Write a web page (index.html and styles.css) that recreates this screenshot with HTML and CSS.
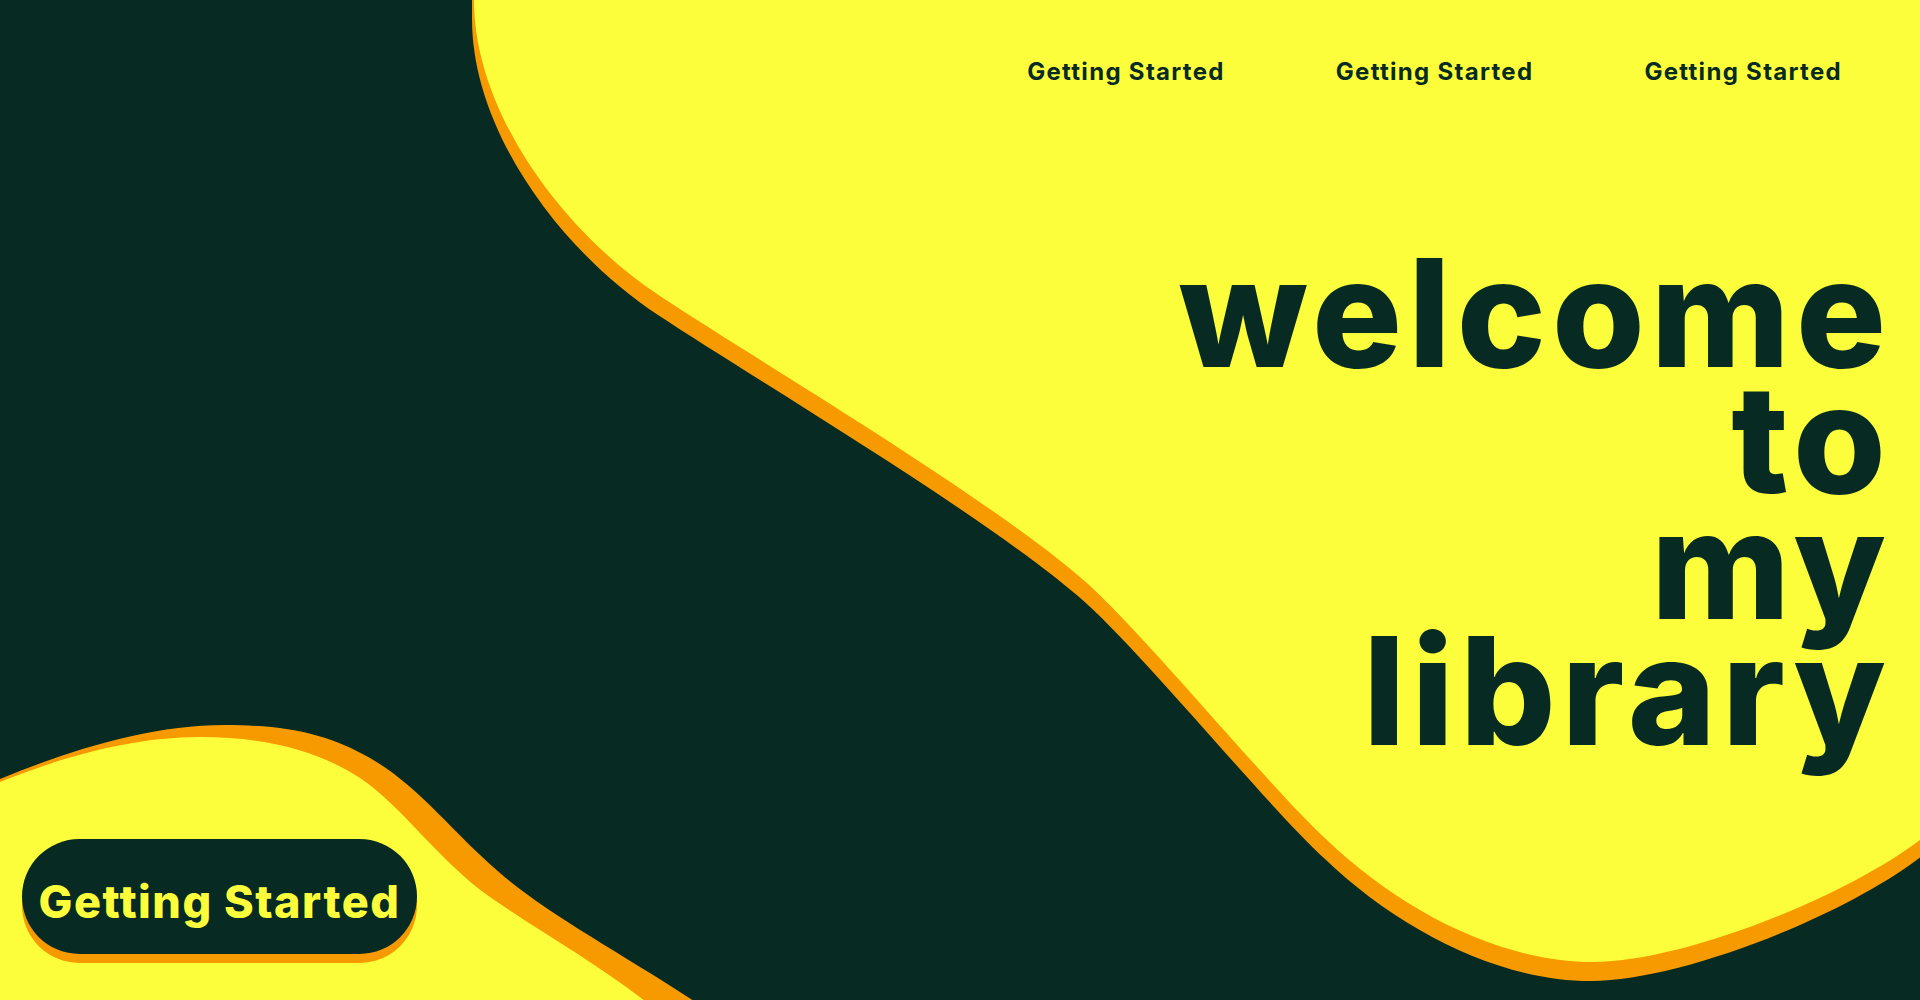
FILE: index.html
```html
<!DOCTYPE html>
<html lang="en">
<head>
<meta charset="utf-8">
<title>welcome to my library</title>
<link rel="stylesheet" href="styles.css">
</head>
<body>
<div class="page">
  <svg class="backdrop" viewBox="0 0 1920 1000" width="1920" height="1000" aria-hidden="true">
    <defs>
      <path id="blob" d="M474,-60 L474,0 C474,110 560,230 660,296 C760,362 980,492 1080,577 C1140,628 1267,785 1327,840 C1400,910 1500,962 1593,962 C1680,962 1840,900 1920,840 L2000,780 L2000,-60 Z"/>
    </defs>
    <use class="orange" href="#blob" transform="translate(-2,19)"/>
    <use class="yellow" href="#blob"/>
    <path class="orange" d="M-40,795 L0,779 C70,750 150,725 225,725 C290,725 330,735 370,758 C420,787 450,830 500,873 C550,916 620,952 700,1005 L760,1050 L-40,1050 Z"/>
    <path class="yellow" d="M-40,800 L0,782 C60,758 130,737 200,737 C270,737 320,752 360,778 C400,804 440,862 490,897 C540,932 600,965 650,1005 L700,1040 L-40,1040 Z"/>
  </svg>

  <header class="nav">
    <a class="nav-link" href="#">Getting Started</a>
    <a class="nav-link" href="#">Getting Started</a>
    <a class="nav-link" href="#">Getting Started</a>
  </header>

  <main class="hero">
    <h1 class="title">welcome<br>to<br>my<br>library</h1>
  </main>

  <a class="cta" href="#">Getting Started</a>
</div>
</body>
</html>
```

FILE: styles.css
```css
* {
  box-sizing: border-box;
}

html, body {
  margin: 0;
  padding: 0;
}

body {
  background: #072b23;
  font-family: Inter, "Liberation Sans", sans-serif;
  overflow: hidden;
}

.page {
  position: relative;
  width: 1920px;
  height: 1000px;
  overflow: hidden;
  background: #072b23;
  display: flex;
  flex-direction: column;
}

.backdrop {
  position: absolute;
  left: 0;
  top: 0;
  width: 1920px;
  height: 1000px;
  z-index: 0;
}

.backdrop .yellow {
  fill: #fcfe3b;
}

.backdrop .orange {
  fill: #f69a00;
}

.nav {
  position: relative;
  z-index: 1;
  display: flex;
  justify-content: flex-end;
  gap: 111px;
  padding: 57px 78px 0 0;
}

.nav-link {
  font-size: 24px;
  line-height: 30px;
  font-weight: 700;
  letter-spacing: 1.3px;
  color: #072b23;
  text-decoration: none;
}

.hero {
  position: relative;
  z-index: 1;
  display: flex;
  justify-content: flex-end;
  padding: 163px 28px 0 0;
}

.title {
  margin: 0;
  font-size: 150px;
  line-height: 126px;
  font-weight: 800;
  letter-spacing: 6px;
  color: #072b23;
  text-align: right;
}

.cta {
  position: relative;
  z-index: 1;
  margin: auto 0 46px 22px;
  width: 395px;
  height: 115px;
  border-radius: 58px;
  background: #072b23;
  box-shadow: 0 9px 0 #f69a00;
  display: flex;
  align-items: center;
  justify-content: center;
  padding-top: 10px;
  font-size: 45px;
  font-weight: 800;
  letter-spacing: 1.5px;
  color: #fcfe3b;
  text-decoration: none;
}
```
